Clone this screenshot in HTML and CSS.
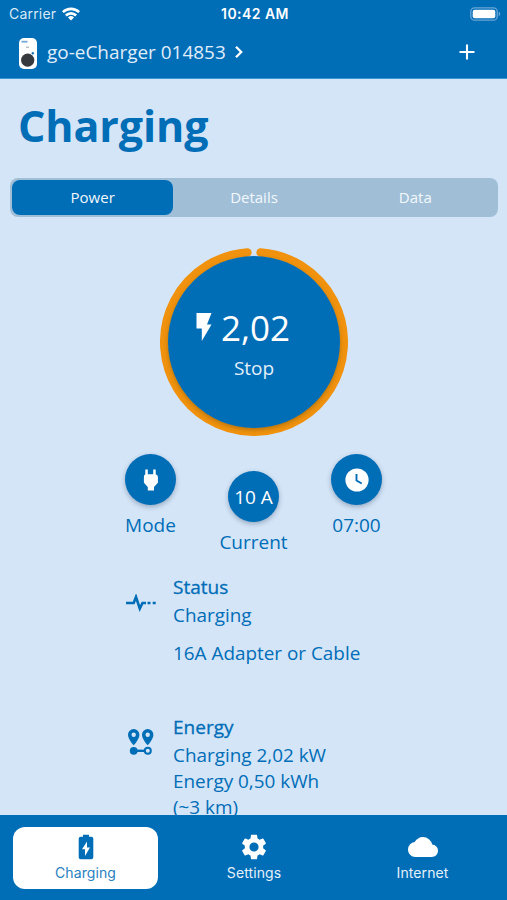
FILE: index.html
```html
<!DOCTYPE html>
<html lang="en">
<head>
<meta charset="utf-8">
<title>Charging</title>
<link rel="stylesheet" href="styles.css">
</head>
<body>
<div class="app">
  <header class="header">
    <div class="statusbar">
      <div class="carrier"><span>Carrier</span>
        <svg class="wifi" viewBox="0 0 18 14" width="18" height="14"><g fill="none" stroke="#fff" stroke-width="2.6"><path d="M.9 5.2a11.5 11.5 0 0 1 16.2 0"/><path d="M3.9 8.5a7.2 7.2 0 0 1 10.2 0"/></g><path d="M9 13.6 6 10.5a4.3 4.3 0 0 1 6 0z" fill="#fff"/></svg>
      </div>
      <div class="time">10:42 AM</div>
      <svg class="battery" viewBox="0 0 31 14" width="31" height="14"><rect x=".8" y=".8" width="26.4" height="12.4" rx="3.8" fill="none" stroke="#69a7d5" stroke-width="1.3"/><rect x="2.7" y="2.7" width="22.6" height="8.6" rx="2" fill="#fff"/><path d="M28.7 4.8q1.6.6 1.6 2.2t-1.6 2.2z" fill="#69a7d5"/></svg>
    </div>
    <div class="devicebar">
      <svg class="charger" viewBox="0 0 20 33" width="20" height="33"><rect x="1" y="1" width="18" height="31" rx="5" fill="#fff"/><path d="M3.5 4.7h6" stroke="#78a9d4" stroke-width="1.8"/><path d="M8 10.3h3" stroke="#b9bec5" stroke-width="1.5"/><circle cx="14.8" cy="16.2" r="1.2" fill="#1671b8"/><circle cx="9.7" cy="23.2" r="6.6" fill="#363a3e"/></svg>
      <span class="device">go-eCharger 014853</span>
      <svg class="chevron" viewBox="0 0 10 14" width="10" height="14"><path d="m2 1.8 5.2 5.2L2 12.2" fill="none" stroke="#fff" stroke-width="2.3"/></svg>
      <svg class="plus" viewBox="0 0 16 16" width="16" height="16"><path d="M8 .5v15M.5 8h15" stroke="#fff" stroke-width="2.1"/></svg>
    </div>
  </header>
  <main class="content">
    <h1>Charging</h1>
    <div class="tabs"><div class="tab active">Power</div><div class="tab">Details</div><div class="tab">Data</div></div>
    <div class="dial">
      <div class="disc">
        <div class="reading"><svg viewBox="0 0 16 28" width="16" height="28"><path d="M.5 0h15L11 11.400h4.500L5.800 28V15.600H.5z" fill="#fff"/></svg><span>2,02</span></div>
        <div class="stop">Stop</div>
      </div>
      <svg class="ring" viewBox="0 0 188 188" width="188" height="188"><path d="M100.600 4.500A89.750 89.750 0 1 1 87.400 4.500" fill="none" stroke="#f0920d" stroke-width="8.500" stroke-linecap="round"/></svg>
    </div>
    <div class="actions">
      <div class="action"><div class="round"><svg viewBox="0 0 16 22" width="16" height="22"><path d="M2.300.5H4.800V5.200H10.200V.5H12.700V5.200Q14.900 5.800 14.900 8V13.800L11 18V21.500H4.800V18L.9 13.800V8Q.9 5.800 2.300 5.200z" fill="#fff"/></svg></div><span>Mode</span></div>
      <div class="action low"><div class="round">10 A</div><span>Current</span></div>
      <div class="action"><div class="round"><svg viewBox="0 0 24 24" width="24" height="24"><circle cx="12" cy="12" r="11.600" fill="#fff"/><path d="M11.500 6v6.500l5.200 3" fill="none" stroke="#006db7" stroke-width="1.900"/></svg></div><span>07:00</span></div>
    </div>
    <section class="info status">
      <svg viewBox="0 0 32 18" width="32" height="18"><path d="M1 9h7.700l2.300-6 3.800 11.500L17.500 9H21" fill="none" stroke="#006db7" stroke-width="2.600"/><path d="M22.500 9h3M27.700 9h3" stroke="#006db7" stroke-width="2.400"/></svg>
      <div><h2>Status</h2><p>Charging</p><p class="gap">16A Adapter or Cable</p></div>
    </section>
    <section class="info energy">
      <svg viewBox="0 0 32 28" width="32" height="28"><g fill="#006db7"><path fill-rule="evenodd" d="M8.700 1a5.700 5.700 0 0 0-5.700 5.700C3 11 8.700 17.300 8.700 17.300S14.400 11 14.400 6.700A5.700 5.700 0 0 0 8.700 1zm0 3.500a2.200 2.200 0 1 1 0 4.400 2.200 2.200 0 0 1 0-4.400z"/><path fill-rule="evenodd" d="M22.700 1A5.700 5.700 0 0 0 17 6.700c0 4.300 5.700 10.600 5.700 10.600S28.400 11 28.400 6.700A5.700 5.700 0 0 0 22.700 1zm0 3.500a2.200 2.200 0 1 1 0 4.400 2.200 2.200 0 0 1 0-4.400z"/><circle cx="8.700" cy="22.800" r="3.900"/></g><path d="M9 22.800h11" stroke="#006db7" stroke-width="2.400"/><circle cx="22.800" cy="22.800" r="3" fill="none" stroke="#006db7" stroke-width="2"/></svg>
      <div><h2>Energy</h2><p>Charging 2,02 kW</p><p>Energy 0,50 kWh</p><p>(~3 km)</p></div>
    </section>
  </main>
  <nav class="nav">
    <div class="item selected"><svg viewBox="0 0 16 26" width="16" height="26"><path d="M5 .8h6v2h2.300q2 0 2 2v18.400q0 2-2 2H2.700q-2 0-2-2V4.800q0-2 2-2H5z" fill="#006db7"/><path d="M9 7.500v6h3L7 22v-6.700H4z" fill="#fff"/></svg><span>Charging</span></div>
    <div class="item"><svg viewBox="1.800 1.800 20.400 20.400" width="26" height="26"><path fill="#fff" d="M19.14 12.94c.04-.3.06-.61.06-.94s-.02-.64-.07-.94l2.03-1.58a.49.49 0 0 0 .12-.61l-1.92-3.32a.49.49 0 0 0-.59-.22l-2.39.96c-.5-.38-1.03-.7-1.62-.94l-.36-2.54a.48.48 0 0 0-.48-.41h-3.84a.47.47 0 0 0-.47.41l-.36 2.54c-.59.24-1.13.57-1.62.94l-2.39-.96a.48.48 0 0 0-.59.22L2.74 8.87a.47.47 0 0 0 .12.61l2.03 1.58c-.05.3-.09.63-.09.94s.02.64.07.94l-2.03 1.58a.49.49 0 0 0-.12.61l1.92 3.32c.12.22.37.29.59.22l2.39-.96c.5.38 1.03.7 1.62.94l.36 2.54c.05.24.24.41.48.41h3.84c.24 0 .44-.17.47-.41l.36-2.54c.59-.24 1.13-.56 1.62-.94l2.39.96c.22.08.47 0 .59-.22l1.92-3.32a.47.47 0 0 0-.12-.61zM12 15.6A3.6 3.6 0 1 1 12 8.4a3.6 3.6 0 0 1 0 7.2z"/></svg><span>Settings</span></div>
    <div class="item"><svg viewBox="0 2 24 20" width="30" height="25"><path fill="#fff" d="M19.35 10.04A7.49 7.49 0 0 0 12 4C9.11 4 6.6 5.64 5.35 8.04A5.994 5.994 0 0 0 0 14c0 3.31 2.69 6 6 6h13c2.76 0 5-2.24 5-5 0-2.64-2.05-4.78-4.65-4.96z"/></svg><span>Internet</span></div>
  </nav>
</div>
</body>
</html>
```

FILE: styles.css
```css
* { box-sizing: border-box; }
body, h1, h2, p { margin: 0; }
body { font-family: "Open Sans", sans-serif; background: #d4e5f7; color: #006db7; }
svg { display: block; flex: none; }
.app { width: 507px; height: 900px; display: flex; flex-direction: column; overflow: hidden; }

.header { height: 79px; flex: none; background: #006db7; color: #fff; border-bottom: 1px solid #3b96d4; }
.statusbar { display: grid; grid-template-columns: 1fr auto 1fr; align-items: center; height: 27px; padding: 0 6px 0 9px; font-family: Inter, sans-serif; font-size: 14px; }
.carrier { display: flex; align-items: center; gap: 6px; color: #d8e9f6; letter-spacing: .2px; }
.time { font-weight: 600; font-size: 14px; letter-spacing: .45px; }
.battery { justify-self: end; }
.devicebar { display: flex; align-items: center; height: 50px; padding: 0 32px 0 18px; color: #e0eefa; font-size: 18.950px; }
.charger { margin-top: 2px; }
.device { margin-left: 9px; }
.chevron { margin-left: 8px; }
.plus { margin-left: auto; }

.content { flex: 1; min-height: 0; overflow: hidden; padding-top: 18px; }
h1 { margin-left: 18px; font-size: 43px; line-height: 58px; font-weight: 700; letter-spacing: -.1px; }
.tabs { display: grid; grid-template-columns: repeat(3, 1fr); width: 488px; height: 39px; margin: 23px 0 0 10px; padding: 2px; border-radius: 8px; background: #a0bfd7; }
.tab { display: flex; align-items: center; justify-content: center; padding-bottom: 1px; color: #f3f8fc; font-size: 15px; }
.active { background: #006db7; border-radius: 8px; }

.dial { position: relative; display: flex; align-items: center; justify-content: center; width: 188px; height: 188px; margin: 31px auto 0 160px; }
.ring { position: absolute; inset: 0; }
.disc { position: relative; z-index: 1; width: 172px; height: 172px; border-radius: 50%; background: #006db7; color: #fff; box-shadow: 0 2px 4px rgba(90, 70, 20, .4); }
.reading { display: flex; align-items: center; gap: 9px; margin: 47px 0 0 28px; height: 48px; font-size: 35px; }
.stop { margin-top: 4px; text-align: center; font-size: 19px; line-height: 26px; color: #e3f0fa; }

.actions { display: flex; justify-content: space-between; width: 309px; margin: 18px 0 0 99px; }
.action { width: 103px; display: flex; flex-direction: column; align-items: center; font-size: 19px; line-height: 26px; }
.action span { margin-top: 7px; }
.low { margin-top: 17px; }
.round { display: flex; align-items: center; justify-content: center; width: 51px; height: 51px; border-radius: 50%; background: #006db7; color: #fff; box-shadow: 0 2px 5px rgba(0, 30, 70, .3); }

.info { display: flex; margin-left: 125px; font-size: 18.900px; line-height: 26px; }
.info svg { width: 32px; margin-right: 16px; }
.info h2 { font-size: 19px; font-weight: 500; margin-bottom: 2px; -webkit-text-stroke: .3px #006db7; }
.status { margin-top: 19px; }
.status svg { margin-top: 20px; }
.gap { margin-top: 12px; }
.energy { margin-top: 48px; }
.energy svg { margin-top: 14px; }

.nav { flex: none; display: grid; grid-template-columns: 145px 1fr 145px; height: 85px; padding: 12px 12px 11px 13px; background: #006db7; color: #e5f1fa; font-family: Inter, sans-serif; font-size: 14px; letter-spacing: .1px; }
.item { display: flex; flex-direction: column; align-items: center; padding-top: 7px; line-height: 20px; }
.item span { margin-top: 3px; }
.item svg { height: 26px; }
.selected { background: #fff; color: #2781c2; border-radius: 12px; }
```
